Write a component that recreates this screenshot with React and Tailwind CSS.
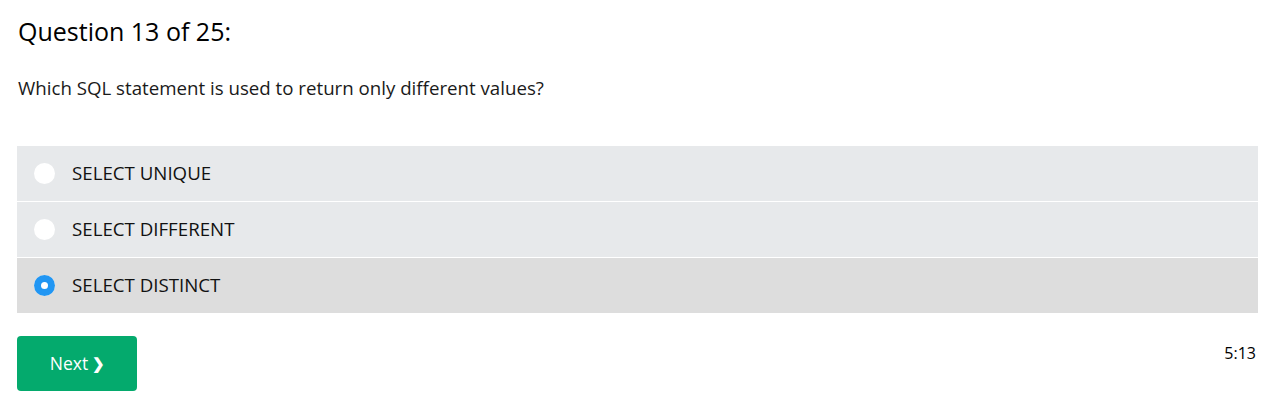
export default function App() {
  const opts = [
    { t: "SELECT UNIQUE", sel: false },
    { t: "SELECT DIFFERENT", sel: false },
    { t: "SELECT DISTINCT", sel: true },
  ];
  return (
    <div className="w-[1277px] h-[407px] bg-white px-[17px] text-[#000]" style={{ fontFamily: '"Open Sans", "Noto Sans", sans-serif' }}>
      <div className="pt-[14px] text-[25px] leading-[34px] h-[48px] pl-[1px]">Question 13 of 25:</div>
      <div className="mt-[28px] text-[18.7px] leading-[24px] text-[#1a1a1a] pl-[1px]">Which SQL statement is used to return only different values?</div>
      <div className="mt-[46px] w-[1241px] flex flex-col">
        {opts.map((o, i) => (
          <div key={i} className={`h-[56px] border-b border-white flex items-center ${o.sel ? "bg-[#dddddd]" : "bg-[#e7e9eb]"}`}>
            <div className="ml-[17px] w-[21px] h-[21px] rounded-full flex items-center justify-center bg-white">
              {o.sel ? (
                <div className="w-[21px] h-[21px] rounded-full bg-[#2196f3] flex items-center justify-center">
                  <div className="w-[7px] h-[7px] rounded-full bg-white"></div>
                </div>
              ) : null}
            </div>
            <div className="ml-[17px] text-[18.7px] text-[#111]">{o.t}</div>
          </div>
        ))}
      </div>
      <div className="mt-[22px] w-[1241px] flex justify-between items-start">
        <button className="w-[120px] h-[55px] rounded-[4px] bg-[#04aa6d] text-white text-[17.5px] flex items-center justify-center gap-[4px] pl-[1px]">
          <span>Next</span>
          <span className="text-[15px] font-bold">❯</span>
        </button>
        <div className="mt-[5px] text-[16px] pr-[2px]">5:13</div>
      </div>
    </div>
  );
}
